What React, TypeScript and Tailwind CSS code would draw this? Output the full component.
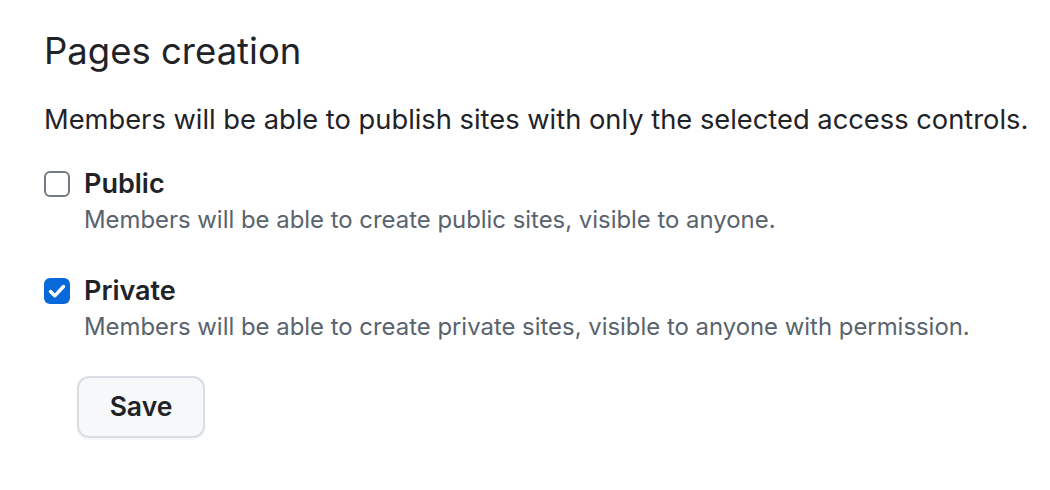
import React from "react";

export default function App() {
  return (
    <div className="w-[1050px] h-[490px] bg-white text-[#1f2328]" style={{ fontFamily: "Inter, 'Noto Sans', sans-serif" }}>
      <div className="pl-[44px] pt-[26px]">
        <h2 className="text-[36.5px] leading-[50px] font-normal">Pages creation</h2>
        <p className="mt-[24px] text-[27.3px] leading-[40px]">Members will be able to publish sites with only the selected access controls.</p>
        <div className="mt-[26px] flex flex-col">
          <div className="flex flex-col">
            <div className="flex items-center gap-[14px]">
              <span className="w-[26px] h-[26px] rounded-[6px] border-2 border-[#747b84] bg-white" />
              <span className="text-[27px] leading-[36px] font-semibold">Public</span>
            </div>
            <div className="pl-[40px] text-[23.9px] leading-[36px] text-[#59636e]">Members will be able to create public sites, visible to anyone.</div>
          </div>
          <div className="mt-[35px] flex flex-col">
            <div className="flex items-center gap-[14px]">
              <span className="w-[26px] h-[26px] rounded-[6px] bg-[#0969da] flex items-center justify-center">
                <svg width="26" height="26" viewBox="0 0 26 26" fill="none">
                  <path d="M6.5 13.5 L10.8 17.8 L19.5 8.5" stroke="white" strokeWidth="3.4" strokeLinecap="round" strokeLinejoin="round" />
                </svg>
              </span>
              <span className="text-[27px] leading-[36px] font-semibold">Private</span>
            </div>
            <div className="pl-[40px] text-[23.9px] leading-[36px] text-[#59636e]">Members will be able to create private sites, visible to anyone with permission.</div>
          </div>
          <div className="mt-[31px] pl-[33px]">
            <button className="w-[128px] h-[62px] rounded-[12px] border-2 border-[#d8dee4] bg-[#f6f8fa] text-[26.5px] font-semibold shadow-[0_2px_0_rgba(31,35,40,0.04)]">Save</button>
          </div>
        </div>
      </div>
    </div>
  );
}
